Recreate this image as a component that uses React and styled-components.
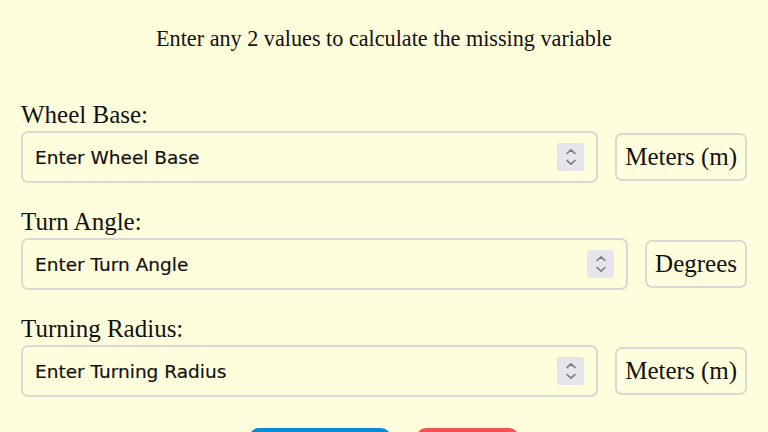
import styled, { createGlobalStyle } from "styled-components";

const GlobalStyle = createGlobalStyle`
  html, body {
    margin: 0;
    padding: 0;
    background: #fffedc;
  }
  body {
    font-family: "Liberation Serif", "Times New Roman", serif;
    color: #111;
  }
`;

const fields = [
  { id: "wheelbase", label: "Wheel Base:", placeholder: "Enter Wheel Base", unit: "Meters (m)" },
  { id: "angle", label: "Turn Angle:", placeholder: "Enter Turn Angle", unit: "Degrees" },
  { id: "radius", label: "Turning Radius:", placeholder: "Enter Turning Radius", unit: "Meters (m)" },
];

const Spinner = () => (
  <SpinBox>
    <svg width="12" height="22" viewBox="0 0 12 22" fill="none" stroke="#7d7d85" strokeWidth="1.7" strokeLinecap="round" strokeLinejoin="round">
      <path d="M2 7.5 L6 3.8 L10 7.5" />
      <path d="M2 14.5 L6 18.2 L10 14.5" />
    </svg>
  </SpinBox>
);

const App = () => {
  return (
    <>
      <GlobalStyle />
      <Page>
        <Intro>Enter any 2 values to calculate the missing variable</Intro>
        <Form>
          {fields.map((f) => (
            <Field key={f.id}>
              <Label htmlFor={f.id}>{f.label}</Label>
              <Row>
                <InputBox>
                  <NumberInput id={f.id} type="text" placeholder={f.placeholder} />
                  <Spinner />
                </InputBox>
                <UnitButton>{f.unit}</UnitButton>
              </Row>
            </Field>
          ))}
        </Form>
        <Actions>
          <ActionButton $tone="blue">Calculate</ActionButton>
          <ActionButton $tone="red">Clear</ActionButton>
        </Actions>
      </Page>
    </>
  );
};

export default App;

const Page = styled.div`
  padding: 26px 21px 40px;
`;

const Intro = styled.p`
  margin: 0 0 50px;
  text-align: center;
  font-size: 22.2px;
  line-height: 25px;
`;

const Form = styled.div`
  display: flex;
  flex-direction: column;
  gap: 25px;
`;

const Field = styled.div`
  display: flex;
  flex-direction: column;
`;

const Label = styled.label`
  font-size: 25px;
  line-height: 28px;
  margin-bottom: 2px;
`;

const Row = styled.div`
  display: flex;
  align-items: center;
  gap: 17px;
`;

const InputBox = styled.div`
  flex: 1;
  display: flex;
  align-items: center;
  height: 52px;
  box-sizing: border-box;
  border: 2px solid #d9d9d4;
  border-radius: 7px;
  padding: 0 12px;
`;

const NumberInput = styled.input`
  flex: 1;
  min-width: 0;
  border: none;
  outline: none;
  background: transparent;
  font-family: "DejaVu Sans", Verdana, sans-serif;
  font-size: 18.5px;
  color: #111;
  padding: 0;
  -webkit-text-stroke: 0.2px #111;
  &::placeholder {
    color: #111;
    opacity: 1;
  }
`;

const SpinBox = styled.div`
  width: 27px;
  height: 28px;
  display: flex;
  align-items: center;
  justify-content: center;
  background: #e6e5ec;
  border-radius: 2px;
`;

const UnitButton = styled.div`
  height: 48px;
  box-sizing: border-box;
  display: flex;
  align-items: center;
  padding: 0 8px;
  border: 2px solid #d9d9d4;
  border-radius: 7px;
  font-size: 25px;
  white-space: nowrap;
  color: #111;
`;

const Actions = styled.div`
  display: flex;
  justify-content: center;
  gap: 25px;
  margin-top: 31px;
`;

const ActionButton = styled.button`
  border: none;
  border-radius: 10px;
  height: 46px;
  padding: 0 28px;
  min-width: ${(p) => (p.$tone === "blue" ? "142px" : "101px")};
  background: ${(p) => (p.$tone === "blue" ? "#0a8bd6" : "#f45252")};
  color: #fff;
  font-family: "Liberation Serif", serif;
  font-size: 22px;
`;
